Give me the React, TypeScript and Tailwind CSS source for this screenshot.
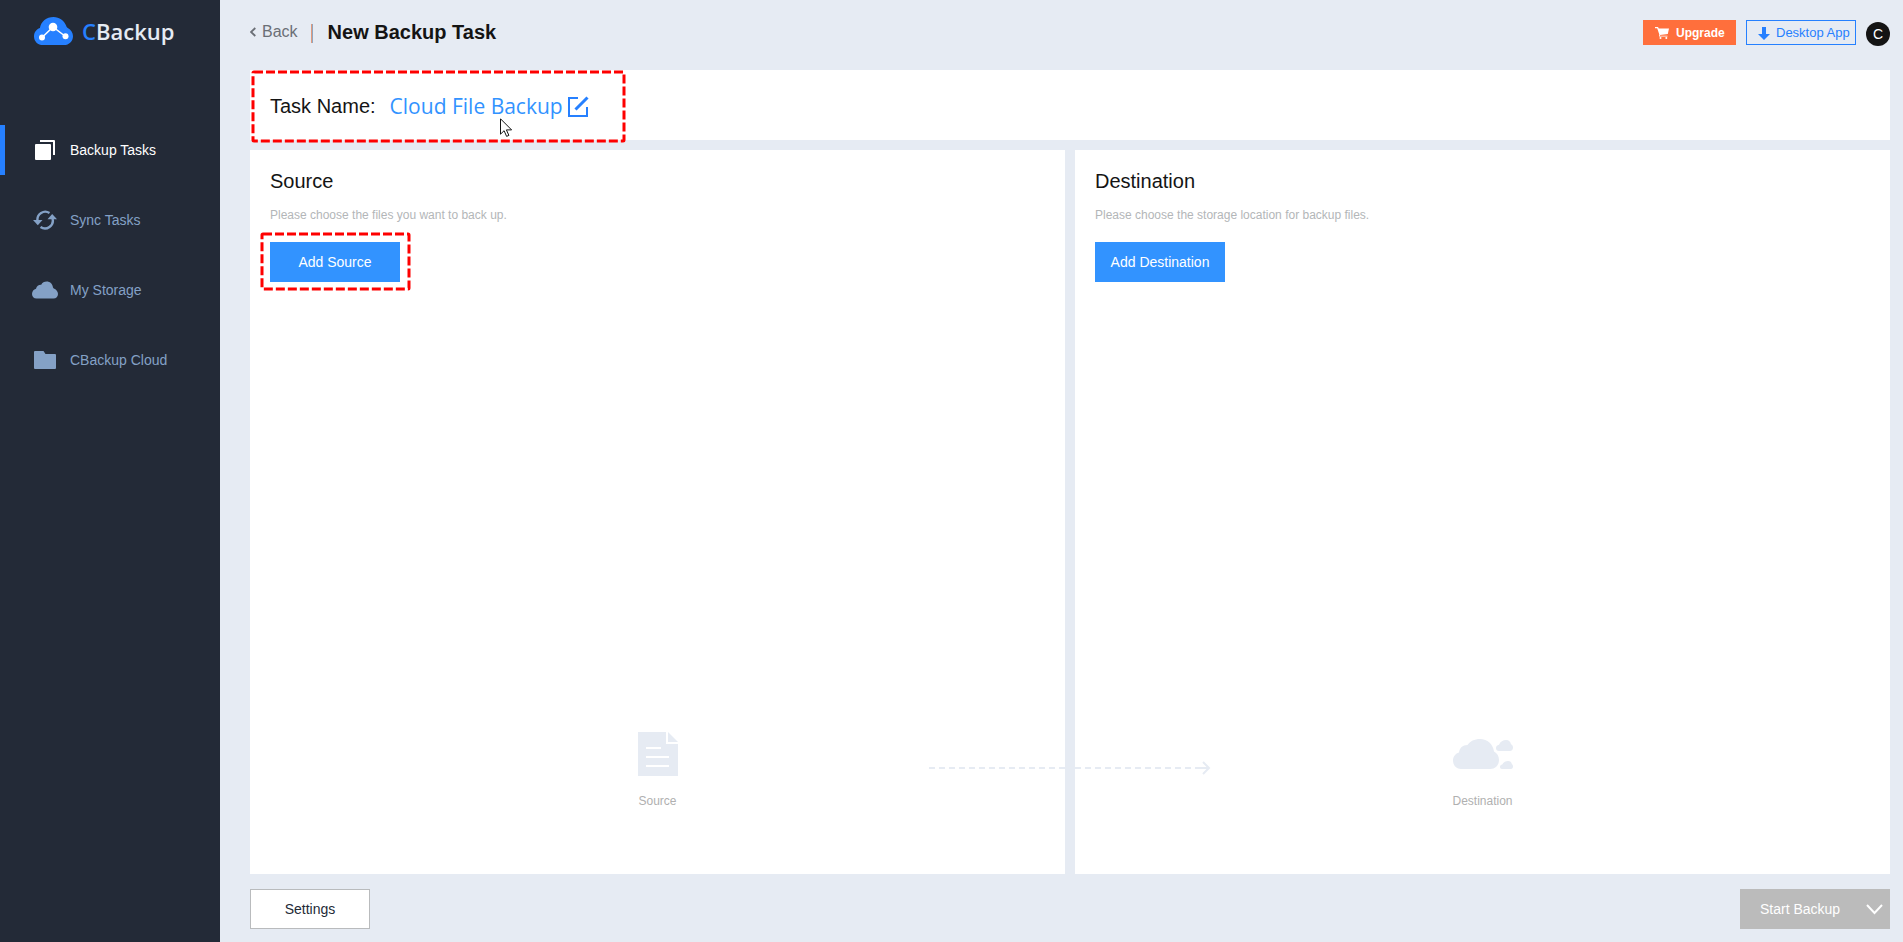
import { useState } from 'react';

const navItems = [
  { id: 'backup', label: 'Backup Tasks', icon: TasksIcon },
  { id: 'sync', label: 'Sync Tasks', icon: SyncIcon },
  { id: 'storage', label: 'My Storage', icon: CloudIcon },
  { id: 'cloud', label: 'CBackup Cloud', icon: FolderIcon },
];

function TasksIcon() {
  return (
    <svg width="20" height="20" viewBox="0 0 20 20" fill="currentColor">
      <rect x="0" y="4" width="16" height="16" rx="1" />
      <path d="M5 0h14a1 1 0 0 1 1 1v14h-2V2H5z" />
    </svg>
  );
}

function SyncIcon() {
  return (
    <svg width="24" height="20" viewBox="0 0 24 20" fill="none">
      <path d="M4.500 10.500A7.800 7.800 0 0 1 16.500 3" stroke="currentColor" strokeWidth="2.400" />
      <path d="M19.500 8.500A7.800 7.800 0 0 1 7.500 17" stroke="currentColor" strokeWidth="2.400" />
      <path d="M0 10h9.500l-4.700 5.300z" fill="currentColor" />
      <path d="M14.500 9.200H24L19.200 4z" fill="currentColor" />
    </svg>
  );
}

function CloudIcon() {
  return (
    <svg width="26" height="18" viewBox="0 0 26 18" fill="currentColor">
      <path d="M4.500 17.500C1.800 17.500 0 15.600 0 13c0-2.600 1.800-4.600 4-5.200C4.600 5 6.800 3.500 9.200 3.700 10.200 1.600 12.300.5 14.700.5c3.300 0 5.600 2.200 6.200 5.400.1.700.3 1.100 1 1.500C24.700 8.700 26 10.600 26 13c0 2.600-1.800 4.500-4.500 4.500z" />
    </svg>
  );
}

function FolderIcon() {
  return (
    <svg width="22" height="18" viewBox="0 0 22 18" fill="currentColor">
      <path d="M1 0h8.500l2 3H21a1 1 0 0 1 1 1v13a1 1 0 0 1-1 1H1a1 1 0 0 1-1-1V1a1 1 0 0 1 1-1z" />
    </svg>
  );
}

function Logo() {
  return (
    <div className="flex items-center h-[62px] pl-[34px] gap-[9px]">
      <svg width="39" height="28" viewBox="0 0 39 28">
        <path
          d="M9 28C3.800 28 0 24.300 0 19.400c0-3.900 2.300-7 5.900-8.300C7 4.500 12.400 0 19.500 0c5.900 0 10.800 3.500 12.700 8.800.3 1 .6 1.500 1.600 2.200C37 12.700 39 15.600 39 19.200c0 5-3.900 8.800-9 8.800z"
          fill="#2680ff"
        />
        <path d="M8 20.500 19 10l12.500 9.500" stroke="#fff" strokeWidth="1.500" fill="none" />
        <circle cx="8" cy="20.500" r="3" fill="#fff" />
        <circle cx="19" cy="10" r="4.300" fill="#fff" />
        <circle cx="31.500" cy="19.300" r="3" fill="#fff" />
      </svg>
      <span className="text-[22px] leading-7 font-semibold text-[#e6ebf3] font-['Open_Sans',sans-serif]">
        <span className="text-[#2680ff]">C</span>Backup
      </span>
    </div>
  );
}

function Sidebar() {
  const [active, setActive] = useState('backup');

  return (
    <aside className="w-[220px] shrink-0 bg-[#232a37]">
      <Logo />
      <nav className="flex flex-col gap-5 mt-[63px]">
        {navItems.map(({ id, label, icon: Icon }) => (
          <a
            key={id}
            href={`#${id}`}
            onClick={() => setActive(id)}
            className={`flex items-center h-[50px] border-l-[5px] pl-[27px] text-sm ${
              active === id ? 'border-[#2680ff] text-white' : 'border-transparent text-[#84a1c6]'
            }`}
          >
            <span className="flex justify-center w-[26px] mr-3">
              <Icon />
            </span>
            {label}
          </a>
        ))}
      </nav>
    </aside>
  );
}

function Header() {
  return (
    <header className="flex items-center h-[70px] pb-[6px]">
      <a href="#back" className="flex items-center gap-[6px] text-base text-[#6b6f76]">
        <svg width="6" height="10" viewBox="0 0 6 10" fill="none">
          <path d="M5.300 1 1 5l4.300 4" stroke="currentColor" strokeWidth="1.800" />
        </svg>
        Back
      </a>
      <span className="w-[2px] h-[19px] ml-[13px] mr-[15px] mt-[2px] border-l border-r border-l-[#e39a7c] border-r-[#8fa6c0]" />
      <h1 className="text-xl leading-6 font-bold text-[#141414]">New Backup Task</h1>

      <div className="flex items-center ml-auto pt-px">
        <button className="flex items-center h-[25px] w-[93px] pl-3 gap-[7px] bg-[#ff6f3c] text-white text-xs font-bold">
          <svg width="14" height="12" viewBox="0 0 14 12" fill="currentColor">
            <path d="M0 0h3l.8 1.500H14L12.800 7 5 8v.7h7.500v.8H4L4.300 7.500 2.200 1.200H0z" />
            <circle cx="5.500" cy="11" r="1" />
            <circle cx="11.300" cy="11" r="1" />
          </svg>
          Upgrade
        </button>
        <button className="flex items-center h-[25px] w-[110px] ml-[10px] pl-[11px] pt-px gap-[6px] border border-[#2680ff] text-[#2680ff] text-[13px] whitespace-nowrap">
          <svg width="12" height="13" viewBox="0 0 12 13" fill="currentColor">
            <path d="M4 0h4v7h4l-6 6-6-6h4z" />
          </svg>
          Desktop App
        </button>
        <button className="size-6 ml-[10px] mt-[3px] rounded-full bg-[#141414] text-white text-sm leading-6">C</button>
      </div>
    </header>
  );
}

// dashed red frame laid over a part of the page
function Highlight({ className }: { className: string }) {
  return (
    <svg className={`absolute pointer-events-none overflow-visible ${className}`}>
      <rect width="100%" height="100%" rx="1" fill="none" stroke="#fe0000" strokeWidth="3" strokeDasharray="9 3" />
    </svg>
  );
}

function TaskName() {
  return (
    <section className="relative flex items-center h-[70px] pl-5 pt-[2px] bg-white">
      <span className="text-xl text-[#141414]">Task Name:</span>
      <button className="flex items-center ml-[14px] gap-[5px] text-[#3293ff] text-[21px] leading-7 font-['Open_Sans',sans-serif]">
        Cloud File Backup
        <svg width="21" height="21" viewBox="0 0 21 21" fill="none" stroke="#2680ff" strokeWidth="2">
          <path d="M10 2H1v18h18v-9" />
          <path d="M7.500 13.500 19.500 1.500" strokeWidth="3" />
        </svg>
      </button>
      <Highlight className="left-[3px] top-[2px] w-[371px] h-[69px]" />
      <svg className="absolute left-[250px] top-[48px]" width="13" height="20" viewBox="0 0 13 20">
        <path
          d="M.5.800v15.400l3.600-3.500 2.500 5.700 2.300-1-2.500-5.500h5.200z"
          fill="#fff"
          stroke="#141414"
          strokeWidth="1"
        />
      </svg>
    </section>
  );
}

function SourceArt() {
  return (
    <svg width="40" height="44" viewBox="0 0 40 44" fill="#e6ebf3">
      <path d="M0 0h28v12h12v32H0z" />
      <path d="M30 0l10 10H30z" />
      <path d="M8 16h15M8 25h23M8 34h23" stroke="#fff" strokeWidth="2" />
    </svg>
  );
}

function DestinationArt() {
  return (
    <svg width="60" height="30" viewBox="0 0 60 30" fill="#e6ebf3">
      <path d="M8 30C3.300 30 0 26.200 0 21.500c0-4 2.500-7 6-8C6.500 9 9.500 6 14.500 6 17 2.300 21.500 0 27 0c7.500 0 13 5 14 12.500 3 1.500 5 4.500 5 8.500 0 5-3.600 9-8.500 9z" />
      <path d="M46 12c-2 0-3-1.300-3-3 0-1.900 1.300-3 3-3.300C47.500 2.500 50 1 53 1c3 0 4.500 1.800 5 4.200 1.300.6 2 1.800 2 3.300 0 2-1.200 3.500-3 3.500z" />
      <path d="M49 30c-1.300 0-2-.8-2-2 0-1.400 1-2.300 2.300-2.500C50.500 23 52.500 22 55 22c2.300 0 3.500 1.200 3.800 3 .8.500 1.200 1.300 1.200 2.500 0 1.500-.7 2.500-2 2.500z" />
    </svg>
  );
}

interface PanelProps {
  title: string;
  hint: string;
  action: string;
  highlighted?: boolean;
  children: React.ReactNode;
}

function Panel({ title, hint, action, highlighted, children }: PanelProps) {
  return (
    <section className="flex flex-1 flex-col bg-white px-5 pt-[17px] pb-[65px]">
      <h2 className="text-xl leading-7 text-[#141414]">{title}</h2>
      <p className="mt-3 text-xs text-[#b3b6b8]">{hint}</p>
      <div className="relative mt-[19px] self-start">
        <button className="w-[130px] h-10 bg-[#3293ff] text-white text-sm">{action}</button>
        {highlighted && <Highlight className="-left-2 -top-2 w-[147px] h-[55px]" />}
      </div>
      <div className="flex flex-col items-center mt-auto text-xs text-[#b0b0b0]">
        <div className="flex items-center h-11">{children}</div>
        <p className="mt-[17px]">{title}</p>
      </div>
    </section>
  );
}

export default function App() {
  return (
    <div className="flex min-h-screen bg-[#e6ebf3] font-['Liberation_Sans',Arial,sans-serif]">
      <Sidebar />
      <main className="flex flex-1 flex-col pl-[30px] pr-[13px] pb-[13px]">
        <Header />
        <TaskName />

        <div className="relative flex flex-1 gap-[10px] mt-[10px]">
          <Panel title="Source" hint="Please choose the files you want to back up." action="Add Source" highlighted>
            <SourceArt />
          </Panel>
          <Panel
            title="Destination"
            hint="Please choose the storage location for backup files."
            action="Add Destination"
          >
            <DestinationArt />
          </Panel>
          {/* arrow from source to destination */}
          <svg
            className="absolute bottom-[99px] left-1/2 -translate-x-1/2"
            width="282"
            height="14"
            viewBox="0 0 282 14"
            fill="none"
            stroke="#e6ebf3"
            strokeWidth="2"
          >
            <path d="M0 7h136M146 7h120" strokeDasharray="6 4" />
            <path d="M266 7h14M274 1l6 6-6 6" />
          </svg>
        </div>

        <footer className="flex justify-between mt-[15px]">
          <button className="w-[120px] h-10 border border-[#b9bbbd] bg-white text-sm text-[#232a37]">Settings</button>
          <button disabled className="flex items-center justify-between w-[150px] h-10 pl-5 pr-[7px] bg-[#bbb] text-sm text-white">
            Start Backup
            <svg width="17" height="11" viewBox="0 0 17 11" fill="none" stroke="currentColor" strokeWidth="2">
              <path d="M1 1l7.500 8L16 1" />
            </svg>
          </button>
        </footer>
      </main>
    </div>
  );
}
